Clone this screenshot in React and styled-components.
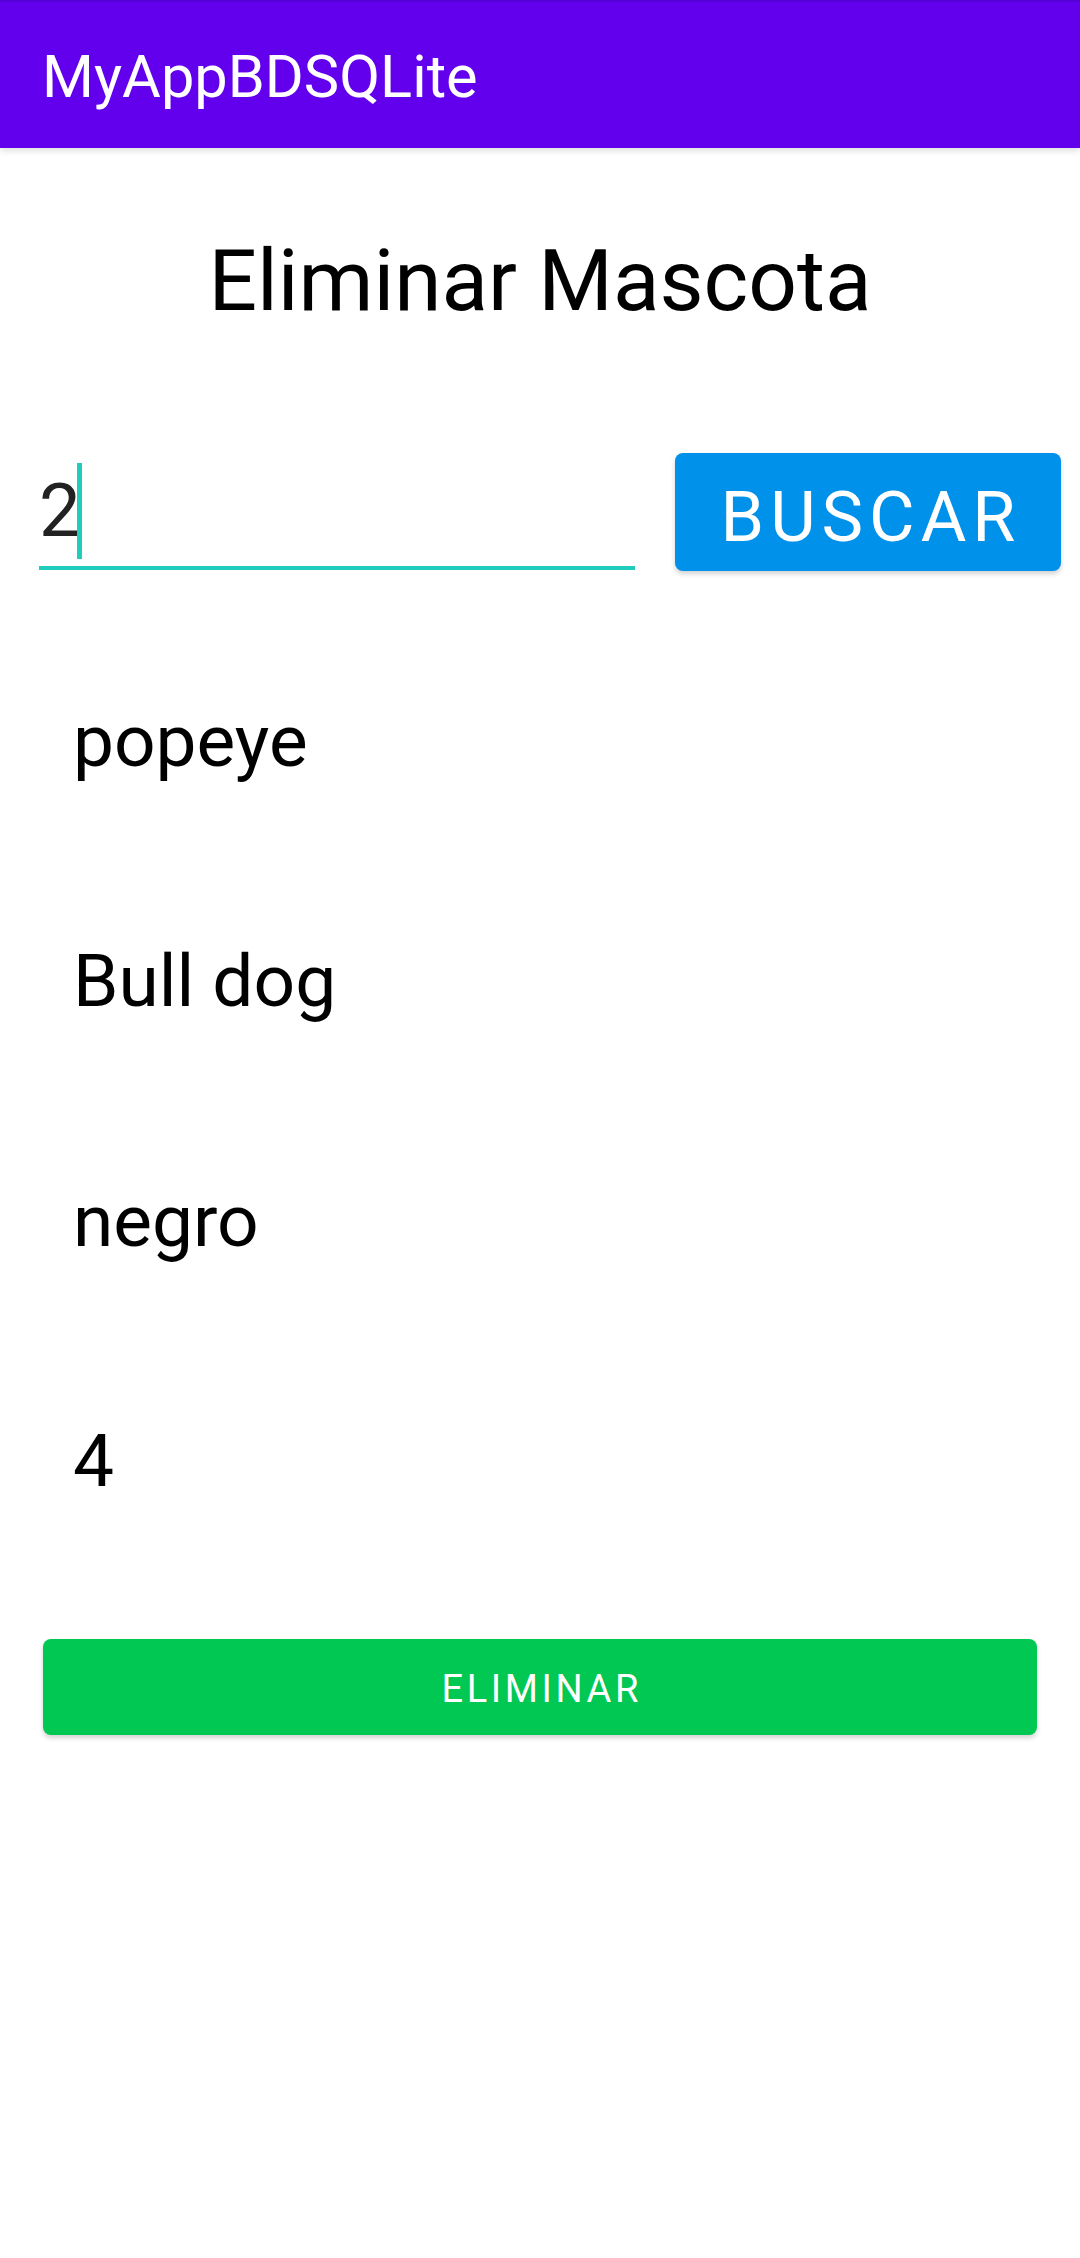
import React from 'react';
import styled, { createGlobalStyle } from 'styled-components';

// +++++++++ CSS +++++++++

const GlobalStyle = createGlobalStyle`
	html, body {
		margin: 0;
		padding: 0;
		background: #ffffff;
		font-family: Roboto, "Noto Sans", "DejaVu Sans", sans-serif;
	}
`;

const Screen = styled.div`
	display: flex;
	flex-direction: column;
	min-height: 2258px;
	background: #ffffff;
`;

const AppBar = styled.header`
	display: flex;
	align-items: center;
	height: 148px;
	box-sizing: border-box;
	padding: 5px 0 0 42px;
	background: #6200ee;
	border-top: 2px solid #5500d6;
	box-shadow: 0 3px 6px rgba(0, 0, 0, 0.12);
	color: #ffffff;
	font-size: 59.5px;
	line-height: 1;
	position: relative;
	z-index: 1;
`;

const Title = styled.h1`
	margin: 83px 0 0;
	font-size: 85.5px;
	font-weight: 400;
	line-height: 100px;
	text-align: center;
	color: #000000;
`;

const SearchRow = styled.div`
	display: flex;
	align-items: flex-start;
	gap: 40px;
	margin-top: 122px;
	padding: 0 19px 0 39px;
`;

const Field = styled.div`
	display: flex;
	align-items: flex-start;
	width: 596px;
	height: 117px;
	box-sizing: border-box;
	padding-top: 10px;
	border-bottom: 4px solid #20cdbd;
`;

const FieldLine = styled.div`
	display: flex;
	align-items: center;
	height: 96px;
`;

const FieldValue = styled.span`
	font-size: 74px;
	line-height: 96px;
	color: #222222;
`;

const Caret = styled.span`
	display: block;
	width: 5px;
	height: 96px;
	margin-left: -4px;
	background: #20cdbd;
`;

const Button = styled.button`
	display: flex;
	align-items: center;
	justify-content: center;
	box-sizing: border-box;
	border: none;
	border-radius: ${props => props.radius}px;
	padding: 0 0 0 ${props => props.spacing}px;
	background: ${props => props.color};
	color: #ffffff;
	font-family: Roboto, "Noto Sans", sans-serif;
	font-weight: 400;
	font-size: ${props => props.size}px;
	letter-spacing: ${props => props.spacing}px;
	box-shadow: 0 3px 5px rgba(0, 0, 0, 0.18);
`;

const SearchButton = styled(Button)`
	width: 386px;
	height: 118px;
	padding-top: 10px;
`;

const DeleteButton = styled(Button)`
	height: 96px;
	margin: 58px 43px 0;
	padding-top: 3px;
`;

const Rows = styled.div`
	display: flex;
	flex-direction: column;
	margin-top: 50px;
`;

const DataRow = styled.div`
	display: flex;
	align-items: center;
	height: 240px;
	padding-left: 73px;
	font-size: 73px;
	color: #000000;
`;

const pet = ['popeye', 'Bull dog', 'negro', '4'];

const App = () => (
	<Screen>
		<GlobalStyle />
		<AppBar>MyAppBDSQLite</AppBar>
		<Title>Eliminar Mascota</Title>
		<SearchRow>
			<Field>
				<FieldLine>
					<FieldValue>2</FieldValue>
					<Caret />
				</FieldLine>
			</Field>
			<SearchButton color="#0091ea" size={70} spacing={6} radius={8}>
				BUSCAR
			</SearchButton>
		</SearchRow>
		<Rows>
			{pet.map(value => (
				<DataRow key={value}>{value}</DataRow>
			))}
		</Rows>
		<DeleteButton color="#00c853" size={38} spacing={3.6} radius={8}>
			ELIMINAR
		</DeleteButton>
	</Screen>
);

export default App;
